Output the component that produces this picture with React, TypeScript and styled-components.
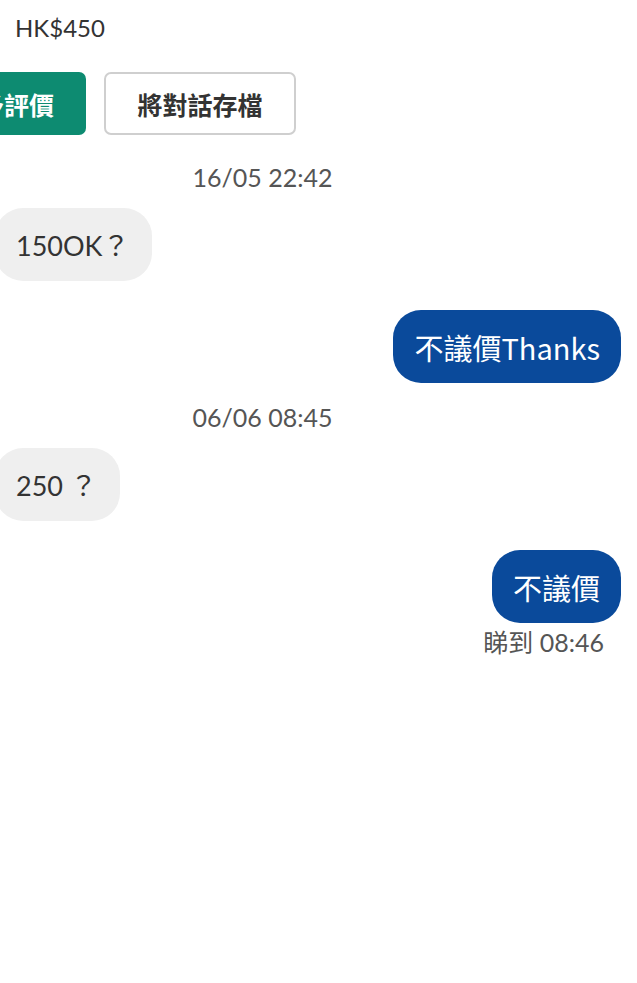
import React from "react";
import styled, { createGlobalStyle } from "styled-components";

type Msg =
  | { kind: "stamp"; text: string }
  | { kind: "in"; text: string }
  | { kind: "out"; text: string; seen?: string };

const messages: Msg[] = [
  { kind: "stamp", text: "16/05 22:42" },
  { kind: "in", text: "150OK？" },
  { kind: "out", text: "不議價Thanks" },
  { kind: "stamp", text: "06/06 08:45" },
  { kind: "in", text: "250 ？" },
  { kind: "out", text: "不議價", seen: "睇到 08:46" },
];

const App = (): JSX.Element => {
  return (
    <>
      <GlobalStyle />
      <Page>
        <Price>HK$450</Price>
        <Actions>
          <PrimaryButton>給予評價</PrimaryButton>
          <OutlineButton>將對話存檔</OutlineButton>
        </Actions>
        <Chat>
          {messages.map((m, i) => {
            if (m.kind === "stamp") return <Stamp key={i}>{m.text}</Stamp>;
            if (m.kind === "in")
              return (
                <Row key={i} side="in">
                  <Bubble side="in">{m.text}</Bubble>
                </Row>
              );
            return (
              <Row key={i} side="out">
                <Bubble side="out">{m.text}</Bubble>
                {m.seen && <Seen>{m.seen}</Seen>}
              </Row>
            );
          })}
        </Chat>
      </Page>
    </>
  );
};

export default App;

const GlobalStyle = createGlobalStyle`
  body {
    margin: 0;
    background: #fff;
    font-family: "Lato", "Noto Sans CJK TC", sans-serif;
    overflow: hidden;
  }
`;

const Page = styled.div`
  width: 637px;
  height: 983px;
  padding: 0 16px 0 15px;
  box-sizing: border-box;
  overflow: hidden;
`;

const Price = styled.div`
  padding-top: 13px;
  height: 42px;
  font-size: 24px;
  line-height: 30px;
  color: #333;
`;

const Actions = styled.div`
  display: flex;
  gap: 18px;
  margin-top: 17px;
  margin-left: -93px;
`;

const PrimaryButton = styled.button`
  height: 63px;
  padding: 0 32px;
  border: none;
  border-radius: 7px;
  background: #0d8b71;
  color: #fff;
  font-family: "Noto Sans CJK TC", sans-serif;
  font-size: 25px;
  font-weight: 700;
`;

const OutlineButton = styled.button`
  height: 63px;
  width: 192px;
  border: 2px solid #cfcfcf;
  border-radius: 7px;
  background: #fff;
  color: #333;
  font-family: "Noto Sans CJK TC", sans-serif;
  font-size: 25px;
  font-weight: 700;
`;

const Chat = styled.div`
  display: flex;
  flex-direction: column;
  margin-left: -111px;
  margin-top: 26px;
`;

const Stamp = styled.div`
  text-align: center;
  font-size: 25px;
  line-height: 32px;
  color: #555;
  margin-bottom: 15px;
`;

const Row = styled.div<{ side: "in" | "out" }>`
  display: flex;
  flex-direction: column;
  align-items: ${(p) => (p.side === "in" ? "flex-start" : "flex-end")};
  padding-left: ${(p) => (p.side === "in" ? "91px" : "0")};
  margin-bottom: ${(p) => (p.side === "in" ? "29px" : "18px")};
`;

const Bubble = styled.div<{ side: "in" | "out" }>`
  height: 73px;
  box-sizing: border-box;
  display: flex;
  align-items: center;
  padding: 0 ${(p) => (p.side === "in" ? "23px" : "21px")} 0 21px;
  border-radius: 28px;
  font-size: ${(p) => (p.side === "in" ? "27px" : "29px")};
  background: ${(p) => (p.side === "in" ? "#efefef" : "#0a4a9b")};
  color: ${(p) => (p.side === "in" ? "#333" : "#fff")};
  font-family: ${(p) =>
    p.side === "in"
      ? `"Lato", "Noto Sans CJK TC", sans-serif`
      : `"Noto Sans CJK TC", sans-serif`};
`;

const Seen = styled.div`
  margin-top: 3px;
  margin-right: 17px;
  font-size: 25px;
  line-height: 32px;
  color: #555;
`;
